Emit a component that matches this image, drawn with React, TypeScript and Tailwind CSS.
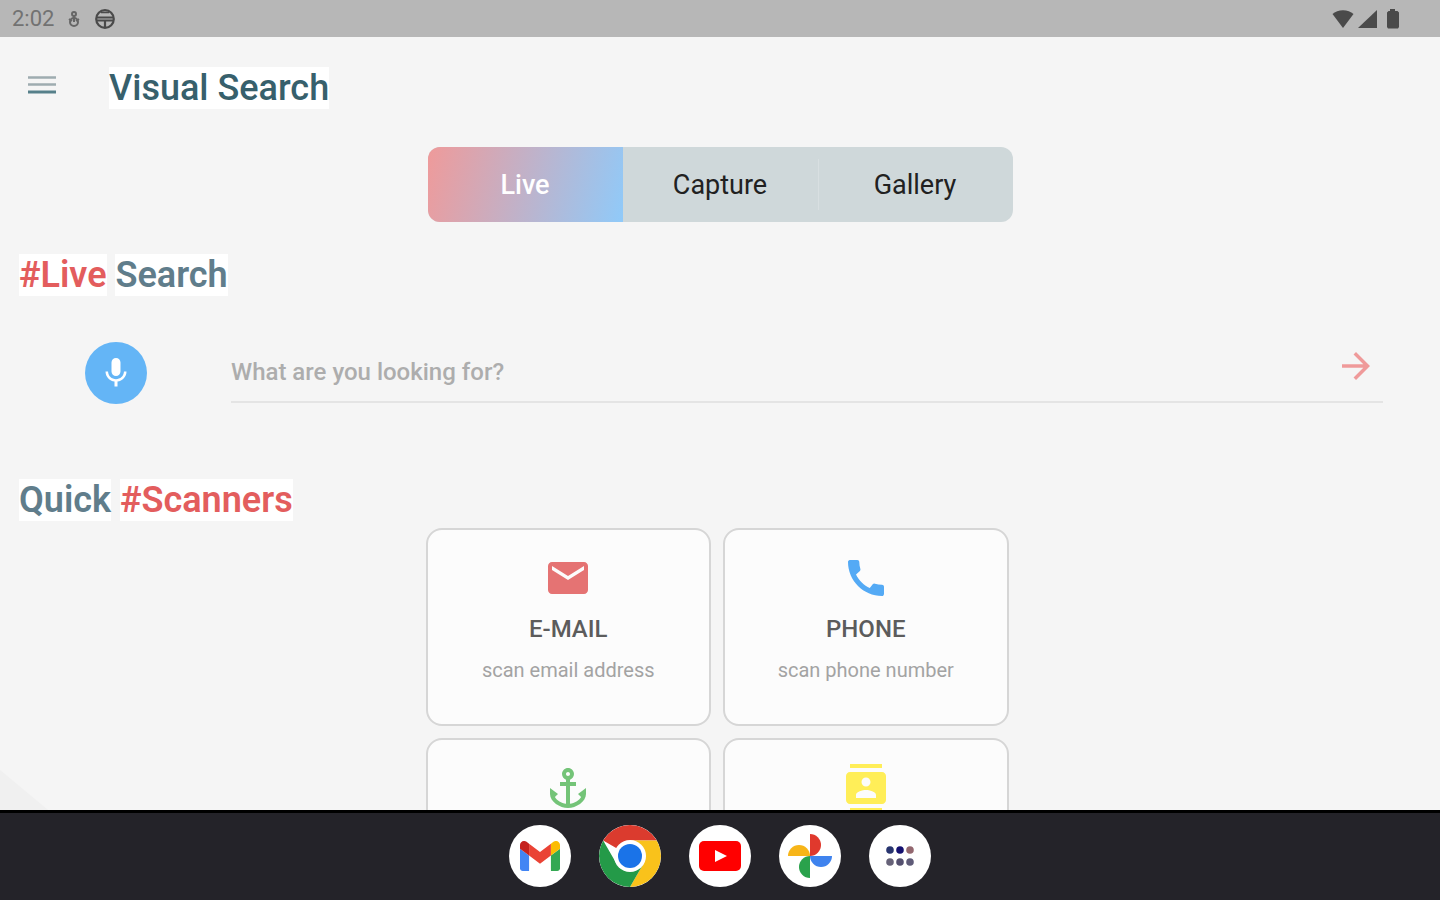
import React, { useState } from "react";
import type { IconType } from "react-icons";
import {
  MdAnchor,
  MdArrowForward,
  MdCall,
  MdContacts,
  MdEmail,
  MdMic,
} from "react-icons/md";

type Scanner = {
  id: string;
  icon: IconType;
  color: string;
  title?: string;
  subtitle?: string;
};

const tabs = ["Live", "Capture", "Gallery"];

const scanners: Scanner[] = [
  {
    id: "email",
    icon: MdEmail,
    color: "text-[#e57373]",
    title: "E-MAIL",
    subtitle: "scan email address",
  },
  {
    id: "phone",
    icon: MdCall,
    color: "text-[#54aaf5]",
    title: "PHONE",
    subtitle: "scan phone number",
  },
  { id: "anchor", icon: MdAnchor, color: "text-[#74c478]" },
  { id: "contacts", icon: MdContacts, color: "text-[#ffee58]" },
];

function StatusBar() {
  return (
    <div className="flex h-[37px] shrink-0 items-center justify-between bg-[#b7b7b7] pl-3 pr-10 text-[#4a4a4a]">
      <div className="flex items-center">
        <span className="text-[22px] leading-6 text-[#727272]">2:02</span>
        <svg className="ml-3 h-5 w-4" viewBox="0 0 16 20" fill="none" stroke="#666" strokeWidth="2">
          <circle cx="8" cy="5" r="2" />
          <circle cx="8" cy="13" r="4" />
          <path d="M8 7v6M3 10l3 2M13 10l-3 2" />
        </svg>
        <svg className="ml-3 size-[22px]" viewBox="0 0 22 22" fill="none" stroke="#4a4a4a" strokeWidth="2.2">
          <circle cx="11" cy="11" r="8.8" />
          <path d="M2.5 9.5h17M2.5 12.5h17M11 12v8" />
          <path d="M7 4.5h8" strokeWidth="1.5" />
        </svg>
      </div>
      <div className="flex items-center">
        <svg className="h-5 w-[22px]" viewBox="0 0 22 20" fill="currentColor">
          <path d="M11 19 .5 5C3 2.800 7 1.200 11 1.200S19 2.800 21.500 5z" />
        </svg>
        <svg className="ml-1 size-5" viewBox="0 0 20 20" fill="currentColor">
          <path d="M19 1v18H0z" />
        </svg>
        <svg className="ml-2 h-5 w-[14px]" viewBox="0 0 14 20" fill="currentColor">
          <path d="M4 0h5v2h2.500L13 3.500V18l-1 1.500H2L1 18V3.500L2.500 2H4z" />
        </svg>
      </div>
    </div>
  );
}

function ModeTabs() {
  const [active, setActive] = useState("Live");

  return (
    <div className="mx-auto mt-[38px] flex h-[75px] w-full max-w-[585px] items-stretch overflow-hidden rounded-xl bg-[#cfd8da]">
      {tabs.map((tab, index) => (
        <button
          key={tab}
          onClick={() => setActive(tab)}
          className={`relative flex-1 pt-px text-[27px] ${
            active === tab
              ? "bg-[linear-gradient(105deg,#ef9a9a,#90caf9)] font-medium text-white"
              : "text-[#212121]"
          }`}
        >
          {index === 2 && (
            <span className="absolute left-0 top-3 h-[51px] w-px bg-[#d8dfe1]"></span>
          )}
          {tab}
        </button>
      ))}
    </div>
  );
}

function SearchRow() {
  const [query, setQuery] = useState("");

  return (
    <form
      className="mt-[46px] flex items-center pl-[85px] pr-[57px]"
      onSubmit={(e) => e.preventDefault()}
    >
      <button
        type="button"
        aria-label="Voice"
        className="flex size-[62px] shrink-0 items-center justify-center rounded-full bg-[#64b5f6] text-white"
      >
        <MdMic className="size-9" />
      </button>
      <div className="ml-[84px] flex h-[60px] flex-1 items-center border-b-2 border-[#e4e4e4]">
        <input
          value={query}
          onChange={(e) => setQuery(e.target.value)}
          aria-label="What are you looking for?"
          placeholder="What are you looking for?"
          className="min-w-0 flex-1 bg-transparent text-2xl font-medium text-gray-600 outline-none placeholder:text-[#adadad]"
        />
        <button
          type="submit"
          aria-label="Search"
          className="mr-[6px] self-start pt-[2px] text-[#ef9a9a]"
        >
          <MdArrowForward className="size-[42px]" />
        </button>
      </div>
    </form>
  );
}

function ScannerCard({ icon: Icon, color, title, subtitle, id }: Scanner) {
  return (
    <button
      aria-label={title ? undefined : id}
      className="flex min-h-[198px] flex-col items-center justify-start rounded-2xl border-2 border-[#d6d6d6] bg-[#fcfcfc] pt-6"
    >
      <Icon className={`size-12 ${color}`} />
      {title && (
        <span className="mt-3 text-2xl font-medium leading-[30px] text-[#5c5c5c]">
          {title}
        </span>
      )}
      {subtitle && (
        <span className="mt-3 text-xl leading-7 text-[#a3a3a3]">{subtitle}</span>
      )}
    </button>
  );
}

function GmailIcon() {
  return (
    <svg className="h-[30px] w-10" viewBox="52 42 88 66">
      <path fill="#4285f4" d="M58 108h14V74L52 59v43c0 3.320 2.690 6 6 6" />
      <path fill="#34a853" d="M120 108h14c3.320 0 6-2.690 6-6V59l-20 15" />
      <path fill="#fbbc04" d="M120 48v26l20-15v-8c0-7.420-8.470-11.650-14.400-7.200" />
      <path fill="#ea4335" d="M72 74V48l24 18 24-18v26L96 92" />
      <path fill="#c5221f" d="M52 51v8l20 15V48l-5.600-4.200c-5.940-4.450-14.400-.22-14.400 7.200" />
    </svg>
  );
}

function ChromeIcon() {
  return (
    <svg className="size-full" viewBox="0 0 62 62">
      <path fill="#db3b2e" d="M31 31 4.150 15.500A31 31 0 0 1 57.850 15.500L31 15.500z" />
      <path fill="#f9c21b" d="M31 15.500H57.850A31 31 0 0 1 31 62L44.420 38.750z" />
      <path fill="#249a48" d="M4.150 15.500 17.580 38.750 31 46.500 44.420 38.750 31 62A31 31 0 0 1 4.150 15.500" />
      <circle cx="31" cy="31" r="16" fill="#fff" />
      <circle cx="31" cy="31" r="12" fill="#1a73e8" />
    </svg>
  );
}

function YoutubeIcon() {
  return (
    <svg className="h-[30px] w-[42px]" viewBox="0 0 42 30">
      <rect width="42" height="30" rx="5" fill="#f00" />
      <path d="M16 9v12l12-6z" fill="#fff" />
    </svg>
  );
}

function PhotosIcon() {
  return (
    <svg className="size-11" viewBox="0 0 44 44">
      <path fill="#e0392d" d="M22 0a11 11 0 0 1 0 22z" />
      <path fill="#3f83ee" d="M44 22a11 11 0 0 1-22 0z" />
      <path fill="#2aa24c" d="M22 44a11 11 0 0 1 0-22z" />
      <path fill="#f7b518" d="M0 22a11 11 0 0 1 22 0z" />
    </svg>
  );
}

function AppsIcon() {
  return (
    <svg className="h-5 w-7" viewBox="0 0 28 20">
      <circle cx="4" cy="4" r="3.800" fill="#28356f" />
      <circle cx="14" cy="4" r="3.800" fill="#141070" />
      <circle cx="24" cy="4" r="3.800" fill="#93676f" />
      <circle cx="4" cy="16" r="3.800" fill="#666278" />
      <circle cx="14" cy="16" r="3.800" fill="#54506f" />
      <circle cx="24" cy="16" r="3.800" fill="#5f5b78" />
    </svg>
  );
}

const dockApps = [
  { name: "Gmail", icon: GmailIcon },
  { name: "Chrome", icon: ChromeIcon },
  { name: "YouTube", icon: YoutubeIcon },
  { name: "Photos", icon: PhotosIcon },
  { name: "Apps", icon: AppsIcon },
];

function Dock() {
  return (
    <nav className="flex h-[90px] shrink-0 items-center justify-center gap-7 border-t-[3px] border-black bg-[#242329] pb-[2px]">
      {dockApps.map(({ name, icon: Icon }) => (
        <button
          key={name}
          aria-label={name}
          className="flex size-[62px] items-center justify-center overflow-hidden rounded-full bg-white"
        >
          <Icon />
        </button>
      ))}
    </nav>
  );
}

export default function App() {
  return (
    <div className="flex h-screen flex-col bg-[#f5f5f5] font-[Roboto,sans-serif]">
      <StatusBar />

      <main className="relative min-h-0 flex-1 overflow-hidden">
        {/* Background corner */}
        <svg className="absolute bottom-0 left-0 h-11 w-12" viewBox="0 0 48 44">
          <path d="M0 4 48 44H0z" fill="#f0f0f0" />
        </svg>

        <header className="flex items-center pl-7 pt-[30px]">
          <button aria-label="Menu" className="mb-[6px] text-[#7f989e]">
            <svg className="h-5 w-7" viewBox="0 0 28 20">
              <path d="M0 2.500h28M0 9.500h28" stroke="#9eacb0" strokeWidth="2.500" />
              <path d="M0 17h28" stroke="#56808a" strokeWidth="3" />
            </svg>
          </button>
          <h1 className="ml-[53px] bg-white text-4xl font-medium leading-[42px] text-[#37606c]">
            Visual Search
          </h1>
        </header>

        <ModeTabs />

        <h2 className="mt-8 pl-[19px] text-4xl font-semibold leading-[42px] text-[#607d8b]">
          <span className="bg-white text-[#e35d5d]">#Live</span>{" "}
          <span className="bg-white">Search</span>
        </h2>

        <SearchRow />

        <h2 className="mt-[75px] pl-[19px] text-4xl font-semibold leading-[42px] text-[#607d8b]">
          <span className="bg-white">Quick</span>{" "}
          <span className="bg-white text-[#e35d5d]">#Scanners</span>
        </h2>

        <div className="mt-[7px] pr-[6px]">
          <div className="mx-auto grid w-full max-w-[583px] grid-cols-2 gap-3">
            {scanners.map((scanner) => (
              <ScannerCard key={scanner.id} {...scanner} />
            ))}
          </div>
        </div>
      </main>

      <Dock />
    </div>
  );
}
